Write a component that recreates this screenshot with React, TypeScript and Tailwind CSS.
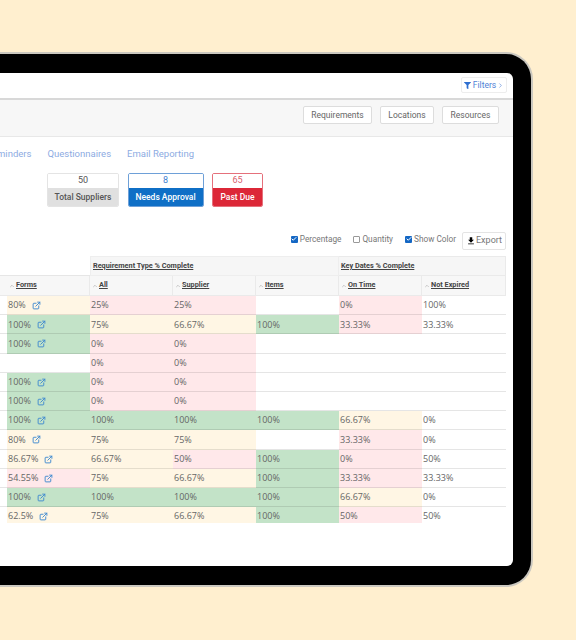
import { Check, ChevronUp, ExternalLink, ChevronRight } from "lucide-react";
import { FaFilter } from "react-icons/fa";
import { MdFileDownload } from "react-icons/md";

const GREEN = "bg-[#c3e3c8]";
const YELLOW = "bg-[#fff6e4]";
const RED = "bg-[#ffe8ea]";

const rows = [
  ["80", "25", "25", "", "0", "100"],
  ["100", "75", "66.67", "100", "33.33", "33.33"],
  ["100", "0", "0", "", "", ""],
  ["", "0", "0", "", "", ""],
  ["100", "0", "0", "", "", ""],
  ["100", "0", "0", "", "", ""],
  ["100", "100", "100", "100", "66.67", "0"],
  ["80", "75", "75", "", "33.33", "0"],
  ["86.67", "66.67", "50", "100", "0", "50"],
  ["54.55", "75", "66.67", "100", "33.33", "33.33"],
  ["100", "100", "100", "100", "66.67", "0"],
  ["62.5", "75", "66.67", "100", "50", "50"],
];

const columns = ["Forms", "All", "Supplier", "Items", "On Time", "Not Expired"];

function cellColor(value: string, col: number) {
  // last column is never coloured
  if (value === "" || col === 5) return "";
  const n = parseFloat(value);
  if (n === 100) return GREEN;
  if (n > 55) return YELLOW;
  return RED;
}

function Toggle({ label, checked }: { label: string; checked: boolean }) {
  return (
    <div className="flex items-center gap-[2px]">
      {checked ? (
        <span className="flex h-[7px] w-[7px] items-center justify-center rounded-[1px] bg-[#1467c4]">
          <Check className="h-[6px] w-[6px] text-white" strokeWidth={4} />
        </span>
      ) : (
        <span className="h-[7px] w-[7px] rounded-[1px] border border-[#999] bg-white" />
      )}
      <span>{label}</span>
    </div>
  );
}

function Stat({ value, label, box, bottom, num }: { value: string; label: string; box: string; bottom: string; num: string }) {
  return (
    <div className={`flex flex-col overflow-hidden rounded-[2px] border ${box}`}>
      <div className={`flex h-[14px] items-center justify-center bg-white text-[9px] ${num}`}>{value}</div>
      <div className={`flex flex-1 items-center justify-center text-[8.5px] font-medium ${bottom}`}>{label}</div>
    </div>
  );
}

export default function App() {
  return (
    <div className="h-[640px] w-[576px] overflow-hidden bg-[#ffefcf] pt-[52px] font-['Roboto',sans-serif]">
      <div className="h-[535px] w-[533px] rounded-r-[27px] border-y-2 border-r-2 border-[#cbc8c0] bg-black pt-[19px] pr-[18px]">
        <div className="flex h-[493px] flex-col overflow-hidden rounded-r-[6px] bg-white text-[#666]">
          {/* Top bar */}
          <div className="flex h-[27px] shrink-0 items-start justify-end border-b-2 border-[#d8d8d8] pt-[4px] pr-[6px]">
            <button className="flex h-[16px] w-[46px] items-center justify-center gap-[2px] rounded-[2px] border border-[#ededed] text-[8.5px] text-[#4f7fd6]">
              <FaFilter className="h-[7px] w-[7px] text-[#2f6fd0]" />
              Filters
              <ChevronRight className="-ml-[1px] h-[7px] w-[7px]" />
            </button>
          </div>

          {/* Sub bar */}
          <div className="flex h-[37px] shrink-0 items-start justify-end gap-[8px] border-b border-[#e8e8e8] bg-[#f7f7f7] pt-[6px] pr-[14px] text-[8.5px]">
            <button className="h-[18px] w-[69px] rounded-[2px] border border-[#ddd] bg-white">Requirements</button>
            <button className="h-[18px] w-[54px] rounded-[2px] border border-[#ddd] bg-white">Locations</button>
            <button className="h-[18px] w-[57px] rounded-[2px] border border-[#ddd] bg-white">Resources</button>
          </div>

          {/* Tabs */}
          <div className="mt-[10px] flex h-[14px] w-[194px] shrink-0 items-center justify-end gap-[16px] overflow-hidden whitespace-nowrap text-[9.5px] text-[#8dabe2]">
            <span className="shrink-0">Reminders</span>
            <span className="shrink-0">Questionnaires</span>
            <span className="shrink-0">Email Reporting</span>
          </div>

          {/* Totals */}
          <div className="mt-[12px] ml-[47px] grid h-[34px] w-[216px] shrink-0 grid-cols-[72px_76px_51px] gap-x-[8.5px]">
            <Stat value="50" label="Total Suppliers" box="border-[#e4e4e4]" bottom="bg-[#e0e0e0] text-[#555]" num="text-[#555]" />
            <Stat value="8" label="Needs Approval" box="border-[#6ea0d8]" bottom="bg-[#0f6fc6] text-white" num="text-[#3f7fd0]" />
            <Stat value="65" label="Past Due" box="border-[#e5707b]" bottom="bg-[#dc2737] text-white" num="text-[#d9606c]" />
          </div>

          {/* Display options */}
          <div className="mt-[25px] flex h-[18px] shrink-0 items-start justify-end pr-[7px] text-[8.25px] text-[#777]">
            <div className="mt-[1px] flex gap-[12px]">
              <Toggle label="Percentage" checked />
              <Toggle label="Quantity" checked={false} />
              <Toggle label="Show Color" checked />
            </div>
            <button className="ml-[6px] flex h-[18px] w-[44px] items-center justify-center rounded-[2px] border border-[#e4e4e4] text-[9px]">
              <MdFileDownload className="h-[10px] w-[10px] text-black" />
              Export
            </button>
          </div>

          {/* Table */}
          <div className="mt-[6px] h-[267px] w-[506px] shrink-0 overflow-hidden">
            <div className="grid grid-cols-[7px_83px_83px_83px_83px_83px_84px] grid-rows-[20px_20px] auto-rows-[19.2px] text-[#555]">
              <div className="col-span-2 border-b border-[#e6e6e6]" />
              <div className="col-span-3 flex items-center border border-[#eee] bg-[#f6f6f6] pl-[2px] text-[7.3px] font-bold text-[#444] underline">
                Requirement Type % Complete
              </div>
              <div className="col-span-2 flex items-center border-y border-r border-[#eaeaea] bg-[#f6f6f6] pl-[2px] text-[7.3px] font-bold text-[#444] underline">
                Key Dates % Complete
              </div>

              <div className="border-b border-[#eaeaea] bg-[#f7f7f7]" />
              {columns.map((c) => (
                <div key={c} className="flex items-center gap-[1px] border-r border-b border-[#eaeaea] bg-[#f7f7f7] pl-[2px] text-[7.3px] font-bold text-[#444]">
                  <ChevronUp className="h-[6px] w-[6px] text-[#999]" />
                  <span className="underline">{c}</span>
                </div>
              ))}

              {rows.map((row, i) => (
                <div key={i} className="contents">
                  <div className="border-b border-black/10" />
                  {row.map((value, col) => (
                    <div key={col} className={`flex items-center border-b border-black/10 pl-px font-['Open_Sans',sans-serif] text-[9px] text-[#666] ${cellColor(value, col)}`}>
                      {value && `${value}%`}
                      {col === 0 && value && <ExternalLink className="mt-[1px] ml-[6px] h-[9px] w-[9px] text-[#3f8ad0]" strokeWidth={2.5} />}
                    </div>
                  ))}
                </div>
              ))}
            </div>
          </div>
        </div>
      </div>
    </div>
  );
}
